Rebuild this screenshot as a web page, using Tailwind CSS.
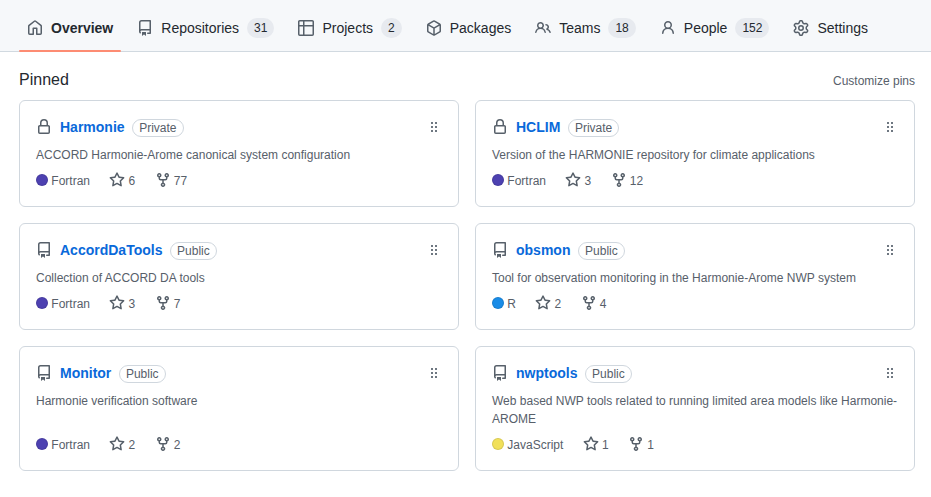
<!DOCTYPE html>
<html lang="en">
<head>
<meta charset="utf-8">
<title>Organization overview</title>
<script src="https://cdn.jsdelivr.net/npm/@tailwindcss/browser@4"></script>
</head>
<body class="bg-white font-['Liberation_Sans',Arial,sans-serif] text-sm text-[#24292f]">
<svg class="hidden" aria-hidden="true">
  <symbol id="home" viewBox="0 0 16 16"><path d="M6.906.664a1.749 1.749 0 0 1 2.187 0l5.25 4.2c.415.332.657.835.657 1.367v7.019A1.75 1.75 0 0 1 13.25 15h-3.5a.75.75 0 0 1-.75-.75V9H7v5.25a.75.75 0 0 1-.75.75h-3.5A1.75 1.75 0 0 1 1 13.25V6.23c0-.531.242-1.034.657-1.366l5.25-4.2Zm1.25 1.171a.25.25 0 0 0-.312 0l-5.25 4.2a.25.25 0 0 0-.094.196v7.019c0 .138.112.25.25.25H5.5V8.25a.75.75 0 0 1 .75-.75h3.5a.75.75 0 0 1 .75.75v5.25h2.75a.25.25 0 0 0 .25-.25V6.23a.25.25 0 0 0-.094-.195Z"/></symbol>
  <symbol id="repo" viewBox="0 0 16 16"><path d="M2 2.5A2.5 2.5 0 0 1 4.5 0h8.75a.75.75 0 0 1 .75.75v12.5a.75.75 0 0 1-.75.75h-2.5a.75.75 0 0 1 0-1.5h1.75v-2h-8a1 1 0 0 0-.714 1.7.75.75 0 1 1-1.072 1.05A2.495 2.495 0 0 1 2 11.5Zm10.5-1h-8a1 1 0 0 0-1 1v6.708A2.486 2.486 0 0 1 4.5 9h8ZM5 12.25a.25.25 0 0 1 .25-.25h3.5a.25.25 0 0 1 .25.25v3.25a.25.25 0 0 1-.4.2l-1.45-1.087a.249.249 0 0 0-.3 0L5.4 15.7a.25.25 0 0 1-.4-.2Z"/></symbol>
  <symbol id="table" viewBox="0 0 16 16"><path d="M0 1.75C0 .784.784 0 1.75 0h12.5C15.216 0 16 .784 16 1.75v12.5A1.75 1.75 0 0 1 14.25 16H1.75A1.75 1.75 0 0 1 0 14.25ZM6.5 6.5v8h7.75a.25.25 0 0 0 .25-.25V6.5Zm8-1.5V1.75a.25.25 0 0 0-.25-.25H6.5V5Zm-13 1.5v7.75c0 .138.112.25.25.25H5v-8ZM5 5V1.5H1.75a.25.25 0 0 0-.25.25V5Z"/></symbol>
  <symbol id="package" viewBox="0 0 16 16"><path d="m8.878.392 5.25 3.045c.54.314.872.89.872 1.514v6.098a1.75 1.75 0 0 1-.872 1.514l-5.25 3.045a1.75 1.75 0 0 1-1.756 0l-5.25-3.045A1.75 1.75 0 0 1 1 11.049V4.951c0-.624.332-1.201.872-1.514L7.122.392a1.75 1.75 0 0 1 1.756 0ZM7.875 1.69l-4.63 2.685L8 7.133l4.755-2.758-4.63-2.685a.248.248 0 0 0-.25 0ZM2.5 5.677v5.372c0 .09.047.171.125.216l4.625 2.683V8.432Zm6.25 8.271 4.625-2.683a.25.25 0 0 0 .125-.216V5.677L8.75 8.432Z"/></symbol>
  <symbol id="people" viewBox="0 0 16 16"><path d="M2 5.5a3.5 3.5 0 1 1 5.898 2.549 5.508 5.508 0 0 1 3.034 4.084.75.75 0 1 1-1.482.235 4 4 0 0 0-7.9 0 .75.75 0 0 1-1.482-.236A5.507 5.507 0 0 1 3.102 8.05 3.493 3.493 0 0 1 2 5.5ZM11 4a3.001 3.001 0 0 1 2.22 5.018 5.01 5.01 0 0 1 2.56 3.012.749.749 0 0 1-.885.954.752.752 0 0 1-.549-.514 3.507 3.507 0 0 0-2.522-2.372.75.75 0 0 1-.574-.73v-.352a.75.75 0 0 1 .416-.672A1.5 1.5 0 0 0 11 5.5.75.75 0 0 1 11 4Zm-5.5-.5a2 2 0 1 0-.001 3.999A2 2 0 0 0 5.5 3.5Z"/></symbol>
  <symbol id="person" viewBox="0 0 16 16"><path d="M10.561 8.073a6.005 6.005 0 0 1 3.432 5.142.75.75 0 1 1-1.498.07 4.5 4.5 0 0 0-8.99 0 .75.75 0 0 1-1.498-.07 6.004 6.004 0 0 1 3.431-5.142 3.999 3.999 0 1 1 5.123 0ZM10.5 5a2.5 2.5 0 1 0-5 0 2.5 2.5 0 0 0 5 0Z"/></symbol>
  <symbol id="gear" viewBox="0 0 16 16"><path d="M8 0a8.2 8.2 0 0 1 .701.031C9.444.095 9.99.645 10.16 1.29l.288 1.107c.018.066.079.158.212.224.231.114.454.243.668.386.123.082.233.09.299.071l1.103-.303c.644-.176 1.392.021 1.82.63.27.385.506.792.704 1.218.315.675.111 1.422-.364 1.891l-.814.806c-.049.048-.098.147-.088.294.016.257.016.515 0 .772-.01.147.038.246.088.294l.814.806c.475.469.679 1.216.364 1.891a7.977 7.977 0 0 1-.704 1.217c-.428.61-1.176.807-1.82.63l-1.102-.302c-.067-.019-.177-.011-.3.071a5.909 5.909 0 0 1-.668.386c-.133.066-.194.158-.211.224l-.29 1.106c-.168.646-.715 1.196-1.458 1.26a8.006 8.006 0 0 1-1.402 0c-.743-.064-1.289-.614-1.458-1.26l-.289-1.106c-.018-.066-.079-.158-.212-.224a5.738 5.738 0 0 1-.668-.386c-.123-.082-.233-.09-.299-.071l-1.103.303c-.644.176-1.392-.021-1.82-.63a8.12 8.12 0 0 1-.704-1.218c-.315-.675-.111-1.422.363-1.891l.815-.806c.05-.048.098-.147.088-.294a6.214 6.214 0 0 1 0-.772c.01-.147-.038-.246-.088-.294l-.815-.806C.635 6.045.431 5.298.746 4.623a7.92 7.92 0 0 1 .704-1.217c.428-.61 1.176-.807 1.82-.63l1.102.302c.067.019.177.011.3-.071.214-.143.437-.272.668-.386.133-.066.194-.158.211-.224l.29-1.106C6.009.645 6.556.095 7.299.03 7.53.01 7.764 0 8 0Zm-.571 1.525c-.036.003-.108.036-.137.146l-.289 1.105c-.147.561-.549.967-.998 1.189-.173.086-.34.183-.5.29-.417.278-.97.423-1.529.27l-1.103-.303c-.109-.03-.175.016-.195.045-.22.312-.412.644-.573.99-.014.031-.021.11.059.19l.815.806c.411.406.562.957.53 1.456a4.709 4.709 0 0 0 0 .582c.032.499-.119 1.05-.53 1.456l-.815.806c-.081.08-.073.159-.059.19.162.346.353.677.573.989.02.03.085.076.195.046l1.102-.303c.56-.153 1.113-.008 1.53.27.161.107.328.204.501.29.447.222.85.629.997 1.189l.289 1.105c.029.109.101.143.137.146a6.6 6.6 0 0 0 1.142 0c.036-.003.108-.036.137-.146l.289-1.105c.147-.561.549-.967.998-1.189.173-.086.34-.183.5-.29.417-.278.97-.423 1.529-.27l1.103.303c.109.029.175-.016.195-.045.22-.313.411-.644.573-.99.014-.031.021-.11-.059-.19l-.815-.806c-.411-.406-.562-.957-.53-1.456a4.709 4.709 0 0 0 0-.582c-.032-.499.119-1.05.53-1.456l.815-.806c.081-.08.073-.159.059-.19a6.464 6.464 0 0 0-.573-.989c-.02-.03-.085-.076-.195-.046l-1.102.303c-.56.153-1.113.008-1.53-.27a4.44 4.44 0 0 0-.501-.29c-.447-.222-.85-.629-.997-1.189l-.289-1.105c-.029-.11-.101-.143-.137-.146a6.6 6.6 0 0 0-1.142 0ZM11 8a3 3 0 1 1-6 0 3 3 0 0 1 6 0ZM9.5 8a1.5 1.5 0 1 0-3.001.001A1.5 1.5 0 0 0 9.5 8Z"/></symbol>
  <symbol id="lock" viewBox="0 0 16 16"><path d="M4 4a4 4 0 0 1 8 0v2h.25c.966 0 1.75.784 1.75 1.75v5.5A1.75 1.75 0 0 1 12.25 15h-8.5A1.75 1.75 0 0 1 2 13.25v-5.5C2 6.784 2.784 6 3.75 6H4Zm8.25 3.5h-8.5a.25.25 0 0 0-.25.25v5.5c0 .138.112.25.25.25h8.5a.25.25 0 0 0 .25-.25v-5.5a.25.25 0 0 0-.25-.25ZM10.5 6V4a2.5 2.5 0 1 0-5 0v2Z"/></symbol>
  <symbol id="star" viewBox="0 0 16 16"><path d="M8 .25a.75.75 0 0 1 .673.418l1.882 3.815 4.21.612a.75.75 0 0 1 .416 1.279l-3.046 2.97.719 4.192a.751.751 0 0 1-1.088.791L8 12.347l-3.766 1.98a.75.75 0 0 1-1.088-.79l.72-4.194L.818 6.374a.75.75 0 0 1 .416-1.28l4.21-.611L7.327.668A.75.75 0 0 1 8 .25Zm0 2.445L6.615 5.5a.75.75 0 0 1-.564.41l-3.097.45 2.24 2.184a.75.75 0 0 1 .216.664l-.528 3.084 2.769-1.456a.75.75 0 0 1 .698 0l2.77 1.456-.53-3.084a.75.75 0 0 1 .216-.664l2.24-2.183-3.096-.45a.75.75 0 0 1-.564-.41L8 2.694Z"/></symbol>
  <symbol id="fork" viewBox="0 0 16 16"><path d="M5 5.372v.878c0 .414.336.75.75.75h4.5a.75.75 0 0 0 .75-.75v-.878a2.25 2.25 0 1 1 1.5 0v.878a2.25 2.25 0 0 1-2.25 2.25h-1.5v2.128a2.251 2.251 0 1 1-1.5 0V8.5h-1.5A2.25 2.25 0 0 1 3.5 6.25v-.878a2.25 2.25 0 1 1 1.5 0ZM5 3.25a.75.75 0 1 0-1.5 0 .75.75 0 0 0 1.5 0Zm6.75.75a.75.75 0 1 0 0-1.5.75.75 0 0 0 0 1.5Zm-3 8.75a.75.75 0 1 0-1.5 0 .75.75 0 0 0 1.5 0Z"/></symbol>
  <symbol id="grip" viewBox="0 0 6 10"><path d="M0 0h2v2H0zM4 0h2v2H4zM0 4h2v2H0zM4 4h2v2H4zM0 8h2v2H0zM4 8h2v2H4z"/></symbol>
</svg>

<nav id="tabs" class="flex h-[52px] gap-2 border-b border-[#d1d9e0] bg-[#f6f8fa] pl-[19px]"></nav>

<main class="px-[19px] pr-4 pt-4">
  <div class="mb-2 flex h-6 items-center justify-between">
    <h2 class="text-base leading-6">Pinned</h2>
    <a class="pt-0.5 text-xs text-[#57606a]">Customize pins</a>
  </div>
  <ol id="pins" class="grid grid-cols-2 gap-4"></ol>
</main>

<script>
const icon = (id, cls) => `<svg class="${cls}"><use href="#${id}"/></svg>`;

const tabs = [
  ['home', 'Overview', ''], ['repo', 'Repositories', '31'], ['table', 'Projects', '2'],
  ['package', 'Packages', ''], ['people', 'Teams', '18'], ['person', 'People', '152'], ['gear', 'Settings', '']
];
document.getElementById('tabs').innerHTML = tabs.map(([id, label, count], i) => `
  <a class="relative flex h-[52px] shrink-0 items-center gap-2 px-2 pb-1 pt-2">
    ${icon(id, 'size-4 shrink-0 fill-[#57606a]')}
    <span class="${i ? '' : 'font-bold'}">${label}</span>
    ${count && `<span class="h-5 rounded-full bg-[#e7eaef] px-[7px] text-xs leading-5">${count}</span>`}
    ${i ? '' : '<span class="absolute inset-x-0 bottom-0 h-0.5 rounded-full bg-[#fd8c73]"></span>'}
  </a>`).join('');

const pins = [
  ['Harmonie', 'Private', 'ACCORD Harmonie-Arome canonical system configuration', 'Fortran', '#4d41b1', 6, 77],
  ['HCLIM', 'Private', 'Version of the HARMONIE repository for climate applications', 'Fortran', '#4d41b1', 3, 12],
  ['AccordDaTools', 'Public', 'Collection of ACCORD DA tools', 'Fortran', '#4d41b1', 3, 7],
  ['obsmon', 'Public', 'Tool for observation monitoring in the Harmonie-Arome NWP system', 'R', '#198ce7', 2, 4],
  ['Monitor', 'Public', 'Harmonie verification software', 'Fortran', '#4d41b1', 2, 2],
  ['nwptools', 'Public', 'Web based NWP tools related to running limited area models like Harmonie-AROME', 'JavaScript', '#f1e05a', 1, 1]
];
document.getElementById('pins').innerHTML = pins.map(([name, access, desc, lang, color, stars, forks]) => `
  <li class="flex flex-col rounded-md border border-[#d0d7de] p-4 text-xs text-[#57606a]">
    <div class="flex h-5 items-center">
      ${icon(access === 'Private' ? 'lock' : 'repo', 'size-4 shrink-0 fill-[#57606a]')}
      <a class="ml-2 text-sm font-bold text-[#0969da]">${name}</a>
      <span class="ml-[7.6px] mt-0.5 h-[18px] rounded-full border border-[#d0d7de] px-1.5 leading-4">${access}</span>
      ${icon('grip', 'ml-auto mr-[5px] h-2.5 w-1.5 fill-[#6e7781]')}
    </div>
    <p class="mb-2 mt-[9px] grow leading-[18px]">${desc}</p>
    <div class="flex h-[18px] items-center">
      <span class="mb-0.5 size-3 rounded-full border border-black/10" style="background-color:${color}"></span>
      <span class="ml-[3.3px]">${lang}</span>
      ${icon('star', 'mb-0.5 ml-[19.3px] mr-[3.3px] size-4 fill-[#57606a]')}
      <span>${stars}</span>
      ${icon('fork', 'mb-0.5 ml-[19.3px] mr-[3.3px] size-4 fill-[#57606a]')}
      <span>${forks}</span>
    </div>
  </li>`).join('');
</script>
</body>
</html>
